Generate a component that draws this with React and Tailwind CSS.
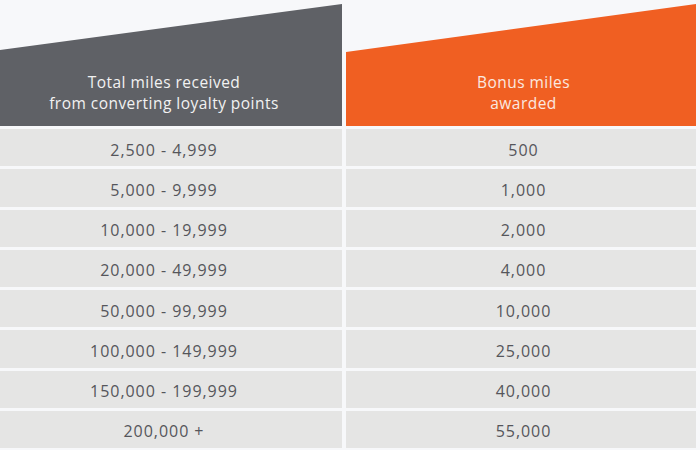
const ROWS = [
  ['2,500 - 4,999', '500'],
  ['5,000 - 9,999', '1,000'],
  ['10,000 - 19,999', '2,000'],
  ['20,000 - 49,999', '4,000'],
  ['50,000 - 99,999', '10,000'],
  ['100,000 - 149,999', '25,000'],
  ['150,000 - 199,999', '40,000'],
  ['200,000 +', '55,000'],
]

export default function App() {
  return (
    <div className="w-[700px] h-[450px] overflow-hidden bg-[#f7f8fa] pt-[4px] font-['Open_Sans',sans-serif]">
      <div className="grid grid-cols-[342px_350px] gap-x-[4px] gap-y-[3px]">
        <div className="h-[122px] bg-[#5f6166] [clip-path:polygon(0_46px,100%_0,100%_100%,0_100%)] flex items-end justify-center pb-[12px] pr-[14px]">
          <p className="text-center text-[#f2f2f2] text-[15.5px] tracking-[0.03em] leading-[21px]">
            Total miles received
            <br />
            from converting loyalty points
          </p>
        </div>
        <div className="h-[122px] bg-[#f05f22] [clip-path:polygon(0_48px,100%_0,100%_100%,0_100%)] flex items-end justify-center pb-[12px] pl-[5px]">
          <p className="text-center text-[#fbe9e0] text-[15.5px] tracking-[0.03em] leading-[21px]">
            Bonus miles
            <br />
            awarded
          </p>
        </div>
        {ROWS.map(([range, bonus]) => (
          <div key={range} className="contents">
            <div className="h-[37.25px] bg-[#e5e5e4] flex items-center justify-center pt-[4px] pr-[14px] text-[16px] tracking-[0.06em] text-[#55565b]">{range}</div>
            <div className="h-[37.25px] bg-[#e5e5e4] flex items-center justify-center pt-[4px] pl-[5px] text-[16px] tracking-[0.06em] text-[#55565b]">{bonus}</div>
          </div>
        ))}
      </div>
    </div>
  )
}
